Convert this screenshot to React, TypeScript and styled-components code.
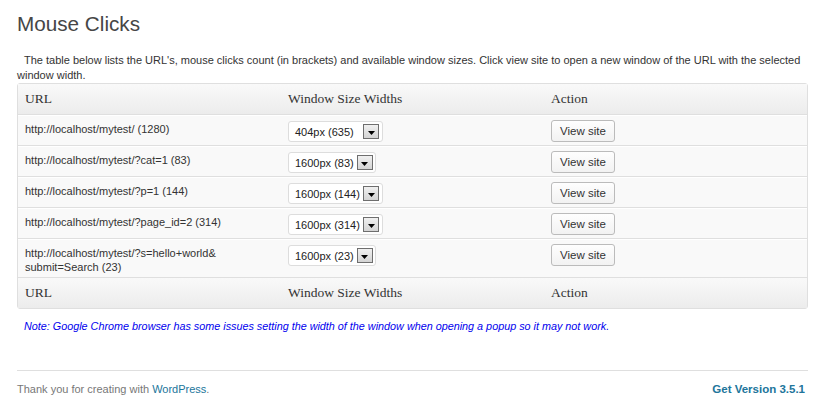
import React from "react";
import styled, { createGlobalStyle } from "styled-components";

const Global = createGlobalStyle`
  html, body { margin: 0; padding: 0; background: #fff; }
  body { font-family: "Liberation Sans", Arial, sans-serif; color: #333; }
`;

const Page = styled.div`
  width: 791px;
  padding: 0 15px 0 17px;
`;

const Title = styled.h2`
  margin: 0;
  padding: 10px 0 0;
  font: 400 20.7px/28px "Liberation Sans", Arial, sans-serif;
  color: #464646;
`;

const Intro = styled.p`
  margin: 15px 0 0;
  font-size: 11px;
  line-height: 15px;
  color: #333;
  text-indent: 7px;
`;

const Table = styled.table`
  width: 100%;
  border-collapse: separate;
  border-spacing: 0;
  table-layout: fixed;
  border: 1px solid #dfdfdf;
  border-radius: 3px;
  background: #f9f9f9;
`;

const HeadCell = styled.th<{ $foot?: boolean }>`
  text-align: left;
  font: 400 13.5px/16px "Liberation Serif", Georgia, serif;
  color: #333;
  padding: 7px 7px;
  background: linear-gradient(to bottom, #f9f9f9, #ececec);
  border-bottom: ${(p) => (p.$foot ? "0" : "1px solid #dfdfdf")};
`;

const Cell = styled.td`
  vertical-align: top;
  padding: 4px 7px 3px;
  font-size: 11px;
  line-height: 14px;
  color: #333;
  border-top: 1px solid #fff;
  border-bottom: 1px solid #dfdfdf;
`;

const UrlText = styled.div`
  padding-top: 2px;
`;

const SelectBox = styled.div`
  margin-top: 1px;
  box-sizing: border-box;
  height: 21px;
  display: inline-flex;
  align-items: center;
  justify-content: space-between;
  padding: 0 3px 0 6px;
  background: #fff;
  border: 1px solid #dddddd;
  border-radius: 3px;
  font-size: 11px;
  color: #222;
  white-space: nowrap;
  vertical-align: top;
`;

const ArrowBox = styled.span`
  flex: none;
  box-sizing: border-box;
  width: 16px;
  height: 15px;
  margin-left: 3px;
  border: 1px solid #6e6e6e;
  background: linear-gradient(to bottom, #f0f0f0, #d4d4d4);
  display: flex;
  align-items: flex-end;
  justify-content: center;
  padding-bottom: 3px;
`;

const Button = styled.button`
  box-sizing: border-box;
  width: 64px;
  height: 22px;
  padding: 0;
  border: 1px solid #bbb;
  border-radius: 3px;
  background: linear-gradient(to bottom, #fefefe, #f2f2f2);
  font: 400 11.5px "Liberation Sans", Arial, sans-serif;
  color: #333;
  text-align: center;
  vertical-align: top;
`;

const Note = styled.p`
  margin: 10px 0 0;
  padding-left: 7px;
  font-size: 10.8px;
  line-height: 14px;
  font-style: italic;
  color: #0000ee;
`;

const Footer = styled.div`
  margin-top: 37px;
  border-top: 1px solid #dfdfdf;
  padding-top: 11px;
  display: flex;
  justify-content: space-between;
  font-size: 11px;
  line-height: 14px;
  color: #777;
`;

const Link = styled.a`
  color: #21759b;
  text-decoration: none;
`;

const Version = styled.a`
  color: #21759b;
  text-decoration: none;
  font-weight: 700;
  font-size: 11.5px;
  margin-right: 3px;
`;

const rows = [
  { url: "http://localhost/mytest/ (1280)", sel: "404px (635)", w: 95 },
  { url: "http://localhost/mytest/?cat=1 (83)", sel: "1600px (83)", w: 88 },
  { url: "http://localhost/mytest/?p=1 (144)", sel: "1600px (144)", w: 95 },
  { url: "http://localhost/mytest/?page_id=2 (314)", sel: "1600px (314)", w: 95 },
  { url: "http://localhost/mytest/?s=hello+world&\nsubmit=Search (23)", sel: "1600px (23)", w: 88 },
];

function Arrow() {
  return (
    <ArrowBox>
      <svg width="7" height="4" viewBox="0 0 7 4">
        <path d="M0 0 L7 0 L3.5 4 Z" fill="#000" />
      </svg>
    </ArrowBox>
  );
}

export default function App() {
  return (
    <>
      <Global />
      <Page>
        <Title>Mouse Clicks</Title>
        <Intro>
          The table below lists the URL's, mouse clicks count (in brackets) and available window sizes. Click view site to open a new window of the URL with the selected window width.
        </Intro>
        <Table>
          <thead>
            <tr>
              <HeadCell>URL</HeadCell>
              <HeadCell>Window Size Widths</HeadCell>
              <HeadCell>Action</HeadCell>
            </tr>
          </thead>
          <tbody>
            {rows.map((r) => (
              <tr key={r.sel + r.url}>
                <Cell>
                  <UrlText>
                    {r.url.split("\n").map((l, i) => (
                      <div key={i}>{l}</div>
                    ))}
                  </UrlText>
                </Cell>
                <Cell>
                  <SelectBox style={{ width: r.w }}>
                    <span>{r.sel}</span>
                    <Arrow />
                  </SelectBox>
                </Cell>
                <Cell>
                  <Button>View site</Button>
                </Cell>
              </tr>
            ))}
          </tbody>
          <tfoot>
            <tr>
              <HeadCell $foot>URL</HeadCell>
              <HeadCell $foot>Window Size Widths</HeadCell>
              <HeadCell $foot>Action</HeadCell>
            </tr>
          </tfoot>
        </Table>
        <Note>
          Note: Google Chrome browser has some issues setting the width of the window when opening a popup so it may not work.
        </Note>
        <Footer>
          <span>
            Thank you for creating with <Link href="#">WordPress</Link>.
          </span>
          <Version href="#">Get Version 3.5.1</Version>
        </Footer>
      </Page>
    </>
  );
}
